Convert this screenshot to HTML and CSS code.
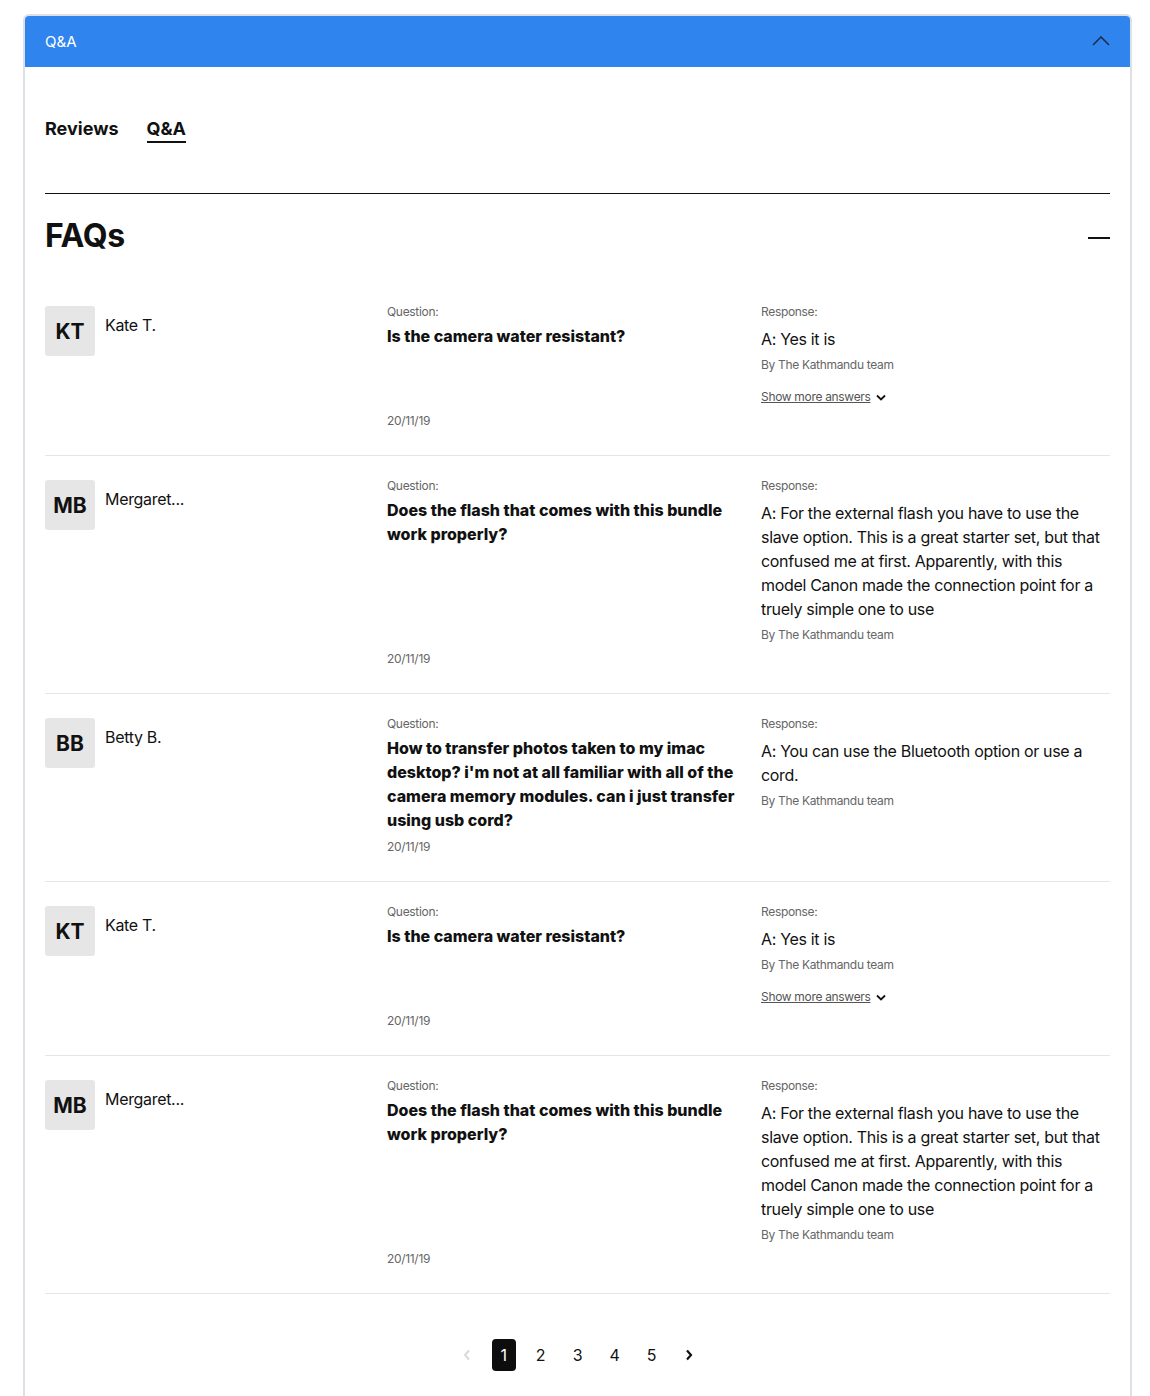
FILE: index.html
```html
<!DOCTYPE html>
<html lang="en">
<head>
<meta charset="utf-8">
<title>Q&amp;A</title>
<link rel="stylesheet" href="styles.css">
</head>
<body>
<div class="page">
  <div class="card">
    <div class="card-header">
      <span class="card-title">Q&amp;A</span>
      <svg class="chev-up" width="18" height="10" viewBox="0 0 18 10"><path d="M1 9 L9 1 L17 9" fill="none" stroke="#1b2d4d" stroke-width="1.6"/></svg>
    </div>
    <div class="card-body">
      <div class="tabs">
        <span class="tab">Reviews</span>
        <span class="tab active">Q&amp;A</span>
      </div>
      <div class="divider"></div>
      <div class="faq-head">
        <h2 class="faq-title">FAQs</h2>
        <span class="minus"></span>
      </div>

      <div class="row">
        <div class="user"><div class="avatar">KT</div><div class="name">Kate T.</div></div>
        <div class="question">
          <div class="label">Question:</div>
          <div class="q-text">Is the camera water resistant?</div>
          <div class="date">20/11/19</div>
        </div>
        <div class="response">
          <div class="label">Response:</div>
          <div class="a-text">A: Yes it is</div>
          <div class="by">By The Kathmandu team</div>
          <div class="more"><span class="more-link">Show more answers</span><svg class="chev-down" width="10" height="7" viewBox="0 0 10 7"><path d="M1 1.5 L5 5.5 L9 1.5" fill="none" stroke="#111" stroke-width="1.8"/></svg></div>
        </div>
      </div>

      <div class="row">
        <div class="user"><div class="avatar">MB</div><div class="name">Mergaret...</div></div>
        <div class="question">
          <div class="label">Question:</div>
          <div class="q-text">Does the flash that comes with this bundle work properly?</div>
          <div class="date">20/11/19</div>
        </div>
        <div class="response">
          <div class="label">Response:</div>
          <div class="a-text">A: For the external flash you have to use the slave option. This is a great starter set, but that confused me at first. Apparently, with this model Canon made the connection point for a truely simple one to use</div>
          <div class="by">By The Kathmandu team</div>
        </div>
      </div>

      <div class="row">
        <div class="user"><div class="avatar">BB</div><div class="name">Betty B.</div></div>
        <div class="question">
          <div class="label">Question:</div>
          <div class="q-text">How to transfer photos taken to my imac desktop? i'm not at all familiar with all of the camera memory modules. can i just transfer using usb cord?</div>
          <div class="date">20/11/19</div>
        </div>
        <div class="response">
          <div class="label">Response:</div>
          <div class="a-text">A: You can use the Bluetooth option or use a cord.</div>
          <div class="by">By The Kathmandu team</div>
        </div>
      </div>

      <div class="row">
        <div class="user"><div class="avatar">KT</div><div class="name">Kate T.</div></div>
        <div class="question">
          <div class="label">Question:</div>
          <div class="q-text">Is the camera water resistant?</div>
          <div class="date">20/11/19</div>
        </div>
        <div class="response">
          <div class="label">Response:</div>
          <div class="a-text">A: Yes it is</div>
          <div class="by">By The Kathmandu team</div>
          <div class="more"><span class="more-link">Show more answers</span><svg class="chev-down" width="10" height="7" viewBox="0 0 10 7"><path d="M1 1.5 L5 5.5 L9 1.5" fill="none" stroke="#111" stroke-width="1.8"/></svg></div>
        </div>
      </div>

      <div class="row">
        <div class="user"><div class="avatar">MB</div><div class="name">Mergaret...</div></div>
        <div class="question">
          <div class="label">Question:</div>
          <div class="q-text">Does the flash that comes with this bundle work properly?</div>
          <div class="date">20/11/19</div>
        </div>
        <div class="response">
          <div class="label">Response:</div>
          <div class="a-text">A: For the external flash you have to use the slave option. This is a great starter set, but that confused me at first. Apparently, with this model Canon made the connection point for a truely simple one to use</div>
          <div class="by">By The Kathmandu team</div>
        </div>
      </div>

      <div class="pagination">
        <span class="pg-item pg-prev"><svg width="8" height="12" viewBox="0 0 8 12"><path d="M6 1.5 L2 6 L6 10.5" fill="none" stroke="#d9d9d9" stroke-width="2"/></svg></span>
        <span class="pg-item pg-active">1</span>
        <span class="pg-item">2</span>
        <span class="pg-item">3</span>
        <span class="pg-item">4</span>
        <span class="pg-item">5</span>
        <span class="pg-item pg-next"><svg width="8" height="12" viewBox="0 0 8 12"><path d="M2 1.5 L6 6 L2 10.5" fill="none" stroke="#111" stroke-width="2.2"/></svg></span>
      </div>
    </div>
  </div>
</div>
</body>
</html>
```
FILE: styles.css
```css
* { box-sizing: border-box; }
html, body { margin: 0; padding: 0; background: #fff; }
body {
  font-family: Inter, "Liberation Sans", Arial, sans-serif;
  color: #111;
  letter-spacing: -0.02em;
}
.page { padding: 14px 18px 0 23px; }
.card {
  border: 2px solid #dde1e6;
  border-bottom: none;
  border-radius: 6px 6px 0 0;
  overflow: hidden;
  min-height: 1400px;
}
.card-header {
  height: 51px;
  background: #2f84ed;
  display: flex;
  align-items: center;
  justify-content: space-between;
  padding: 0 20px 0 20px;
}
.card-title { color: #fff; font-size: 15px; letter-spacing: 0; }
.chev-up { display: block; margin-top: -2px; }
.card-body { padding: 0 20px; }
.tabs { display: flex; gap: 28px; margin-top: 50px; }
.tab { font-size: 18px; font-weight: 700; line-height: 24px; padding-bottom: 0; border-bottom: 2px solid transparent; letter-spacing: 0; }
.tab.active { border-bottom-color: #111; }
.divider { height: 1px; background: #111; margin-top: 50px; }
.faq-head { display: flex; align-items: center; justify-content: space-between; margin-top: 22px; height: 40px; }
.faq-title { margin: 0; font-size: 32px; line-height: 40px; font-weight: 700; letter-spacing: -0.01em; }
.minus { width: 22px; height: 2px; background: #111; margin-top: 3px; }
.faq-head + .row { margin-top: 26px; }
.row {
  display: grid;
  grid-template-columns: 342px 374px 1fr;
  padding: 24px 0 26px;
  border-bottom: 1px solid #e6e6e6;
}
.user { display: flex; gap: 10px; align-items: flex-start; }
.avatar {
  width: 50px; height: 50px; border-radius: 3px;
  background: #e6e6e6;
  display: flex; align-items: center; justify-content: center;
  font-size: 21px; font-weight: 700; letter-spacing: 0;
}
.name { font-size: 16px; line-height: 24px; margin-top: 7px; }
.question { display: flex; flex-direction: column; padding-right: 14px; }
.label { font-size: 12px; line-height: 12px; color: #666; }
.q-text { font-size: 16px; line-height: 24px; font-weight: 800; margin-top: 6px; letter-spacing: 0; }
.date { margin-top: auto; padding-top: 7px; font-size: 12px; line-height: 16px; color: #666; }
.response { padding-bottom: 24px; }
.a-text { font-size: 16px; line-height: 24px; margin-top: 9px; }
.by { font-size: 12px; line-height: 16px; color: #666; margin-top: 6px; }
.more { margin-top: 16px; font-size: 12px; line-height: 16px; display: flex; align-items: center; gap: 5px; }
.more-link { color: #555; text-decoration: underline; }
.chev-down { display: block; margin-top: 1px; }
.pagination {
  display: flex; justify-content: center; gap: 13px;
  margin-top: 45px;
}
.pg-item {
  width: 24px; height: 32px; border-radius: 4px;
  display: flex; align-items: center; justify-content: center;
  font-size: 16px;
}
.pg-active { background: #0d0d0d; color: #fff; }
```
